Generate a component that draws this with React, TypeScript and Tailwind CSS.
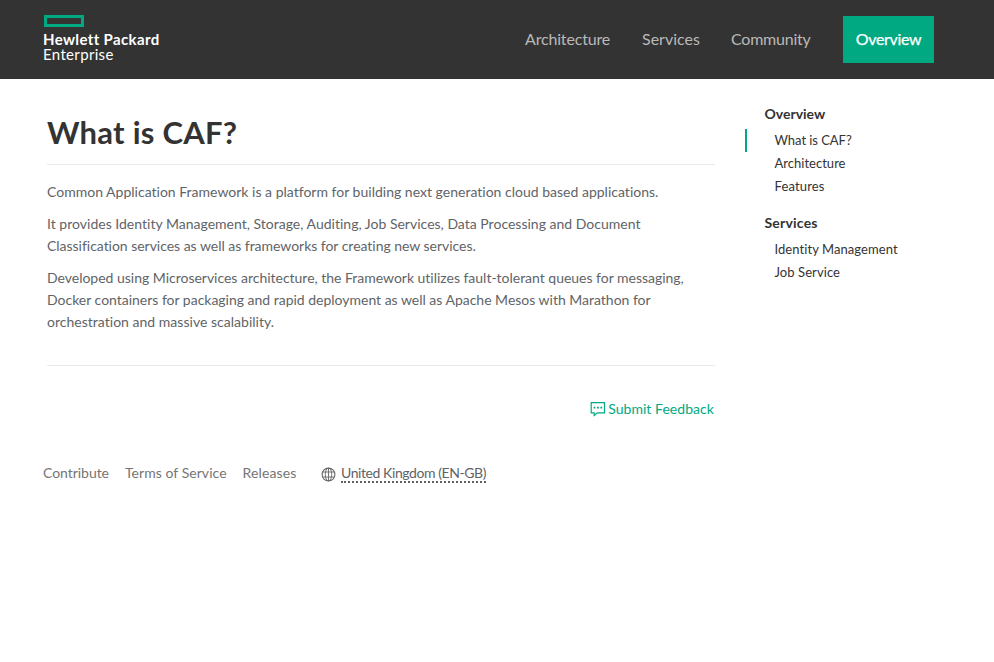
type Item = { label: string; className: string };

const navItems: Item[] = [
  { label: 'Architecture', className: 'mr-[31px] w-[86px] tracking-[-0.17px]' },
  { label: 'Services', className: 'mr-[31px] w-[58px] tracking-[0px]' },
  { label: 'Community', className: 'mr-[32px] w-[80px] tracking-[-0.22px]' },
];

const paragraphs: Item[][] = [
  [
    {
      label: 'Common Application Framework is a platform for building next generation cloud based applications.',
      className: 'tracking-[0.008px]',
    },
  ],
  [
    {
      label: 'It provides Identity Management, Storage, Auditing, Job Services, Data Processing and Document',
      className: 'tracking-[0.01px]',
    },
    {
      label: 'Classification services as well as frameworks for creating new services.',
      className: 'tracking-[-0.029px]',
    },
  ],
  [
    {
      label: 'Developed using Microservices architecture, the Framework utilizes fault-tolerant queues for messaging,',
      className: 'tracking-[-0.015px]',
    },
    {
      label: 'Docker containers for packaging and rapid deployment as well as Apache Mesos with Marathon for',
      className: 'tracking-[-0.012px]',
    },
    { label: 'orchestration and massive scalability.', className: 'tracking-[0.02px]' },
  ],
];

const sections: { title: Item; links: (Item & { active?: boolean })[] }[] = [
  {
    title: { label: 'Overview', className: 'tracking-[0px]' },
    links: [
      { label: 'What is CAF?', className: 'tracking-[-0.05px]', active: true },
      { label: 'Architecture', className: 'tracking-[0.02px]' },
      { label: 'Features', className: 'tracking-[0.15px]' },
    ],
  },
  {
    title: { label: 'Services', className: 'tracking-[0.2px]' },
    links: [
      { label: 'Identity Management', className: 'tracking-[0.07px]' },
      { label: 'Job Service', className: 'tracking-[0.08px]' },
    ],
  },
];

function Logo() {
  return (
    <div className="mt-[15px] ml-[44px] flex flex-col text-[15px] leading-[15px] whitespace-nowrap text-white">
      <span className="h-[12px] w-[40px] border-[3px] border-[#01a982]" />
      <span className="mt-[5px] -ml-px font-bold tracking-[0.36px]">Hewlett Packard</span>
      <span className="-ml-px tracking-[0.34px]">Enterprise</span>
    </div>
  );
}

function FeedbackIcon() {
  return (
    <svg width="16" height="16" viewBox="0 0 16 16" fill="none" stroke="#01a982" strokeWidth="1.2">
      <path d="M1.2 1.6h13.3v10.3H7.4L4.2 14.4v-2.5h-3z" />
      <path d="M3.6 6.6h1.8M7 6.6h1.8M10.4 6.6h1.8" strokeWidth="1.6" />
    </svg>
  );
}

function GlobeIcon() {
  return (
    <svg className="mt-[2px]" width="15" height="15" viewBox="0 0 15 15" fill="none" stroke="#666" strokeWidth="0.9">
      <circle cx="7.5" cy="7.5" r="6.4" strokeWidth="1.1" />
      <ellipse cx="7.5" cy="7.5" rx="3.2" ry="6.4" />
      <path d="M7.5 1.1v12.8M1.8 5h11.4M1.8 10h11.4" />
    </svg>
  );
}

export default function App() {
  return (
    <div className="min-h-[662px] w-full bg-white font-['Lato','Liberation_Sans',sans-serif] text-[#5f6468]">
      <header className="flex h-[79px] items-start justify-between bg-[#333]">
        <Logo />
        <nav className="mt-4 mr-[60px] flex h-[47px] items-center text-base whitespace-nowrap text-[#b9b9b9]">
          {navItems.map((n) => (
            <a key={n.label} className={`pb-[2px] ${n.className}`}>
              {n.label}
            </a>
          ))}
          <a className="flex h-[47px] w-[91px] items-center justify-center bg-[#01a982] pb-[2px] tracking-[-0.35px] text-white [-webkit-text-stroke:0.25px_white]">
            Overview
          </a>
        </nav>
      </header>

      <div className="flex">
        <main className="ml-[47px] w-[668px]">
          <h1 className="mt-[32px] h-[54px] border-b border-[#ebebeb] text-[31px] leading-[43px] font-bold tracking-[0.25px] text-[#333]">
            What is CAF?
          </h1>
          <div className="mt-4 flex flex-col gap-[10px] text-sm leading-[22px] whitespace-nowrap">
            {paragraphs.map((lines, i) => (
              <p key={i}>
                {lines.map((l) => (
                  <span key={l.label} className={`block ${l.className}`}>
                    {l.label}
                  </span>
                ))}
              </p>
            ))}
          </div>
          <hr className="mt-[32px] border-[#ebebeb]" />
          <div className="mt-[32px] flex h-[22px] items-center justify-end gap-[2px] text-sm tracking-[0.05px] text-[#01a982]">
            <FeedbackIcon />
            <a className="mr-px">Submit Feedback</a>
          </div>
        </main>

        <aside className="mt-[23px] ml-[30px] text-[13px] leading-[23px] text-[#333]">
          {sections.map((s) => (
            <section key={s.title.label} className="mb-[13px]">
              <h2 className={`mb-[4px] pl-[19.5px] text-sm leading-[23px] font-bold ${s.title.className}`}>
                {s.title.label}
              </h2>
              {s.links.map((l) => (
                <a
                  key={l.label}
                  className={`block border-l-2 pl-[27.5px] ${l.active ? 'border-[#01a982]' : 'border-transparent'} ${l.className}`}
                >
                  {l.label}
                </a>
              ))}
            </section>
          ))}
        </aside>
      </div>

      <footer className="mt-[42px] ml-[43px] flex h-[22px] items-center text-sm leading-[18px] whitespace-nowrap text-[#757575]">
        <a className="w-[82px] tracking-[-0.04px]">Contribute</a>
        <a className="w-[117.5px] tracking-[0.05px]">Terms of Service</a>
        <a className="w-[78.5px] tracking-[0.14px]">Releases</a>
        <GlobeIcon />
        <a className="ml-[5px] h-[20px] w-[145px] border-b-2 border-dotted border-[#5f6368] leading-[20px] tracking-[-0.42px] text-[#5f6368]">
          United Kingdom (EN-GB)
        </a>
      </footer>
    </div>
  );
}
